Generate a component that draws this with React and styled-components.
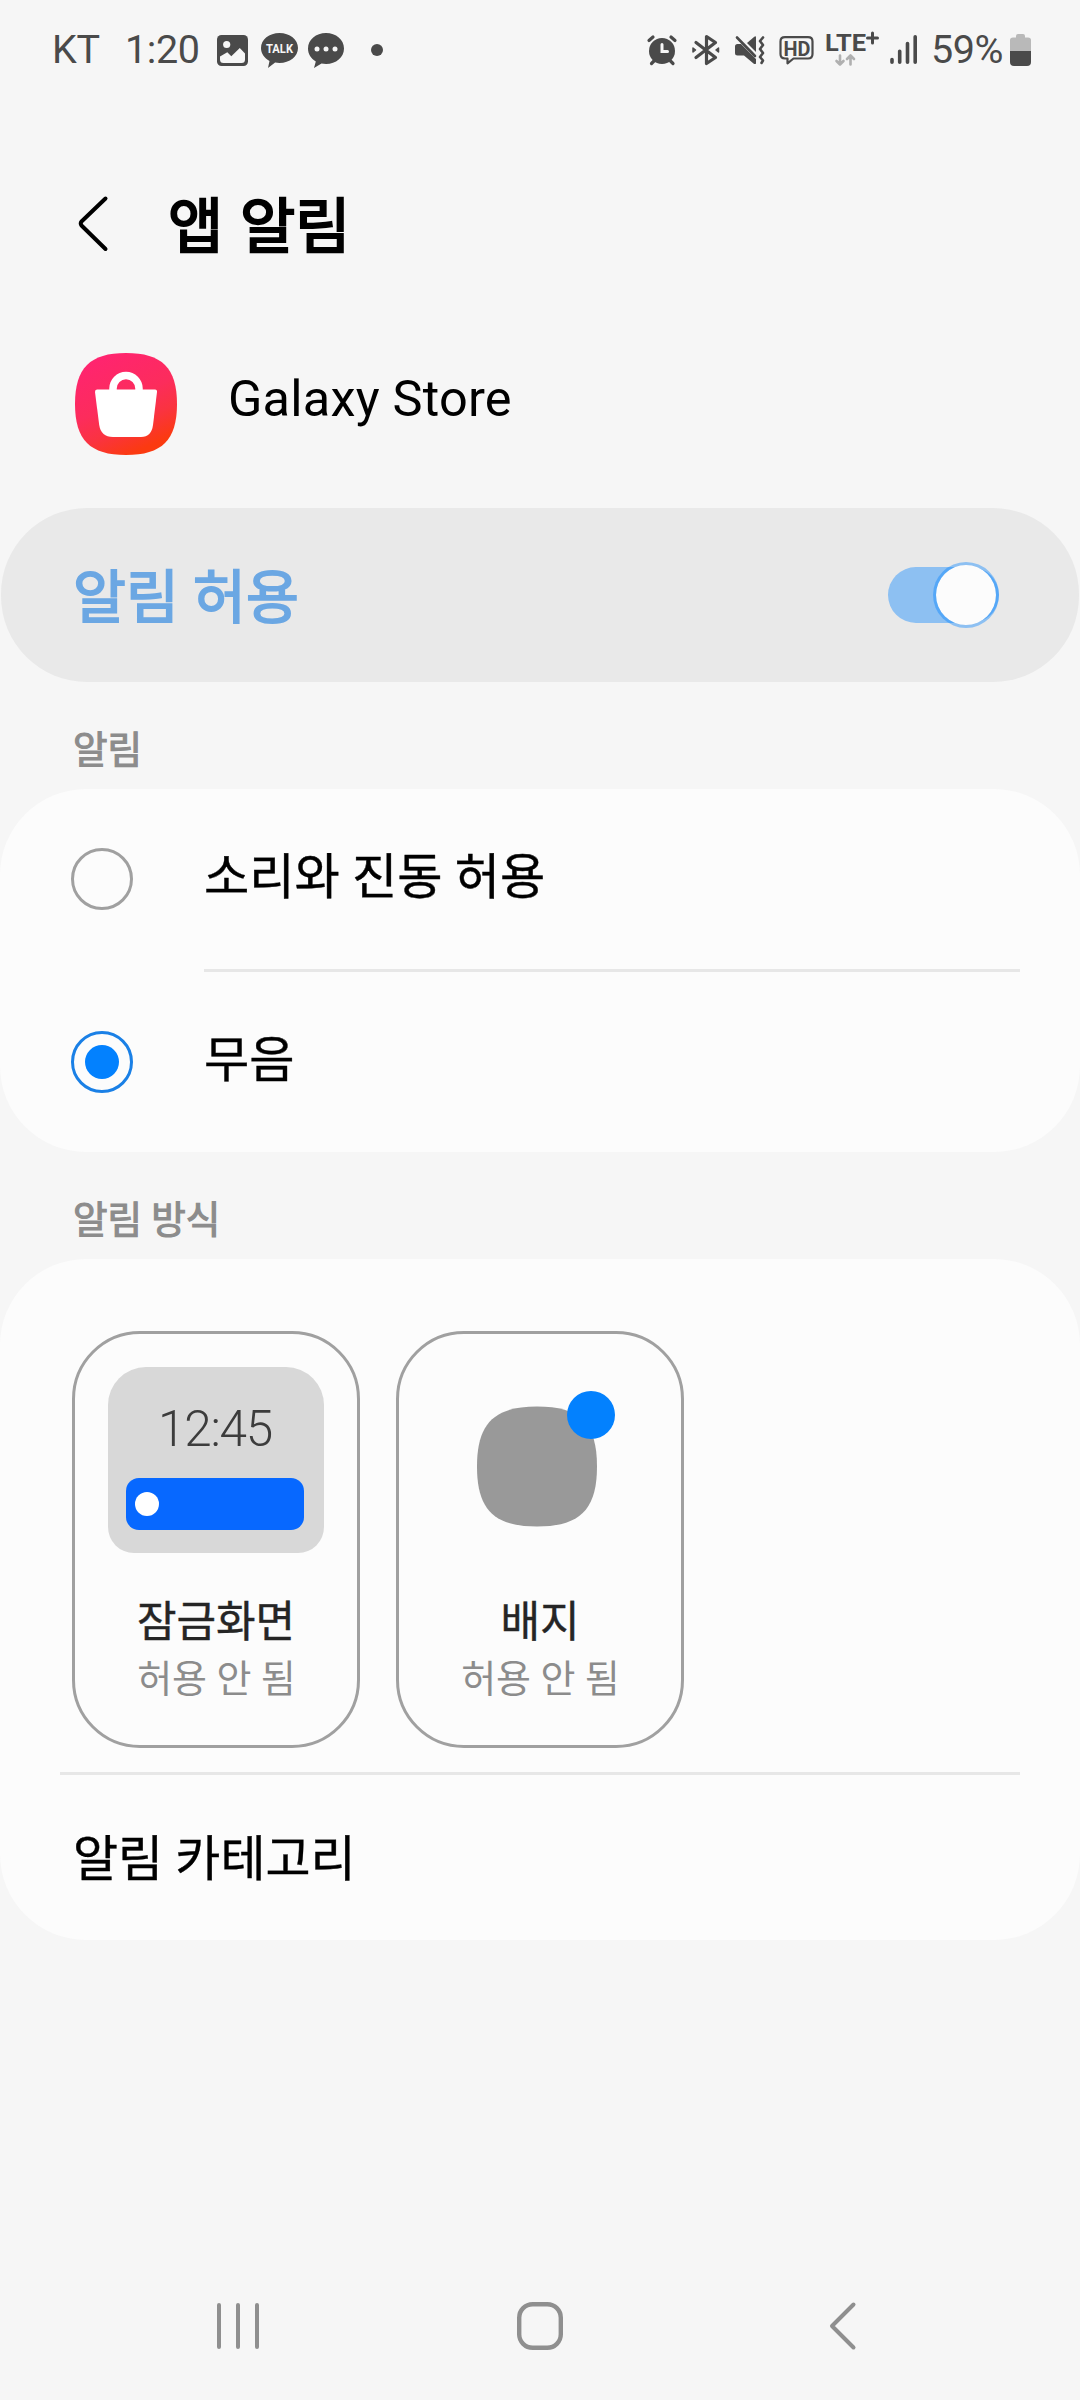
import React, { useState } from 'react'
import styled, { createGlobalStyle } from 'styled-components'

const GlobalStyle = createGlobalStyle`
  * { box-sizing: border-box; }
  body {
    margin: 0;
    background: #f6f6f6;
    font-family: Roboto, "Noto Sans CJK KR", sans-serif;
    color: #000;
  }
  button {
    padding: 0;
    border: none;
    background: none;
    font: inherit;
    color: inherit;
  }
  svg { display: block; flex: none; overflow: visible; }
`

const Screen = styled.div`
  width: 1080px;
  height: 2400px;
  display: flex;
  flex-direction: column;
  background: #f6f6f6;
  overflow: hidden;
`

/* status bar */
const StatusBar = styled.div`
  height: 100px;
  padding: 0 49px 0 52px;
  display: flex;
  justify-content: space-between;
  align-items: center;
  color: #4a4a4a;
  font-size: 39.5px;
  line-height: 48px;
`
const StatusGroup = styled.div`
  display: flex;
  align-items: center;
`
const StatusText = styled.span`
  width: ${(p) => p.$w}px;
  margin-right: ${(p) => p.$gap || 0}px;
  letter-spacing: -0.4px;
  white-space: nowrap;
`
const StatusIcon = styled.svg.attrs((p) => ({
  width: p.$w,
  height: 40,
  viewBox: `0 0 ${p.$w} 40`,
}))`
  margin-right: ${(p) => p.$gap || 0}px;
`

/* header */
const Header = styled.header`
  height: 152px;
  margin-top: 48px;
  padding-left: 77px;
  display: flex;
  align-items: center;
`
const BackButton = styled.button`
  width: 91px;
  height: 60px;
  display: flex;
  align-items: center;
`
const Title = styled.h1`
  margin: 0;
  padding-top: 8px;
  font-size: 60px;
  line-height: 80px;
  font-weight: 400;
  word-spacing: 2px;
  -webkit-text-stroke: 2.2px currentColor;
`
const AppRow = styled.div`
  height: 208px;
  padding-left: 75px;
  display: flex;
  align-items: center;
  gap: 51px;
`
const AppName = styled.span`
  font-size: 50.5px;
  line-height: 60px;
  letter-spacing: 0.2px;
  padding-bottom: 11px;
`

/* cards */
const Card = styled.section`
  border-radius: 86px;
  background: #fcfcfc;
`
const AllowCard = styled.section`
  height: 174px;
  margin: 0 1px;
  padding: 0 80px 0 72px;
  display: flex;
  align-items: center;
  justify-content: space-between;
  border-radius: 86px;
  background: #e9e9e9;
`
const AllowText = styled.span`
  padding-top: 7px;
  font-size: 57.5px;
  line-height: 80px;
  color: #6ba7e3;
  -webkit-text-stroke: 1.8px currentColor;
`
const Switch = styled.button`
  width: 111px;
  height: 56px;
  display: flex;
  align-items: center;
  justify-content: flex-end;
  border-radius: 28px;
  background: rgba(3, 129, 254, 0.4);
`
const Thumb = styled.span`
  flex: none;
  width: 66px;
  height: 66px;
  border: 3px solid rgba(3, 129, 254, 0.4);
  border-radius: 50%;
  background: #fcfcfc;
  background-clip: padding-box;
`
const SectionLabel = styled.h2`
  height: 107px;
  margin: 0;
  padding: 41px 0 0 73px;
  font-size: 37.5px;
  line-height: 54px;
  font-weight: 400;
  color: #8c8c8c;
  -webkit-text-stroke: 1.2px currentColor;
`
const OptionRow = styled.div`
  height: 180px;
  padding-left: 71px;
  display: flex;
  align-items: center;
  gap: 71px;
`
const Radio = styled.span`
  width: 62px;
  height: 62px;
  display: flex;
  align-items: center;
  justify-content: center;
  border: 3px solid ${(p) => (p.$on ? '#1a80e6' : '#a0a0a0')};
  border-radius: 50%;
  &::after {
    content: '';
    width: 34px;
    height: 34px;
    border-radius: 50%;
    background: ${(p) => (p.$on ? '#0381fe' : 'transparent')};
  }
`
const OptionText = styled.span`
  font-size: 49.2px;
  line-height: 70px;
  padding-bottom: 4px;
  -webkit-text-stroke: 0.4px currentColor;
`
const Divider = styled.div`
  height: 3px;
  margin-left: ${(p) => p.$left}px;
  margin-right: 60px;
  background: #e7e7e7;
`

/* notification style tiles */
const TileRow = styled.div`
  padding: 72px 72px 24px;
  display: flex;
  gap: 36px;
`
const Tile = styled.div`
  width: 288px;
  height: 417px;
  padding-top: 33px;
  display: flex;
  flex-direction: column;
  align-items: center;
  border: 3px solid #a0a0a0;
  border-radius: 68px;
`
const LockPreview = styled.div`
  width: 216px;
  height: 186px;
  padding: 32px 20px 0 18px;
  border-radius: 38px 38px 26px 26px;
  background: #d8d8d8;
`
const Clock = styled.div`
  height: 79px;
  text-align: center;
  font-size: 49.5px;
  line-height: 60px;
  font-weight: 300;
  letter-spacing: -1.2px;
  color: #3c3c3c;
`
const Banner = styled.div`
  height: 52px;
  padding-left: 9px;
  display: flex;
  align-items: center;
  border-radius: 13px;
  background: #0768ff;
  &::before {
    content: '';
    width: 24px;
    height: 24px;
    border-radius: 50%;
    background: #fff;
  }
`
const TileTitle = styled.div`
  margin-top: 39px;
  font-size: 43px;
  line-height: 60px;
  color: #252525;
  -webkit-text-stroke: 0.4px currentColor;
`
const TileState = styled.div`
  padding-left: 1px;
  font-size: 38px;
  line-height: 54px;
  color: #8c8c8c;
`
const LinkRow = styled.div`
  height: 165px;
  padding: 4px 0 0 73px;
  display: flex;
  align-items: center;
  font-size: 49px;
  line-height: 70px;
  -webkit-text-stroke: 0.4px currentColor;
`

const NavBar = styled.nav`
  height: 148px;
  margin-top: auto;
  display: grid;
  grid-template-columns: repeat(3, 302px);
  justify-content: center;
`
const NavButton = styled.button`
  display: flex;
  align-items: center;
  justify-content: center;
`

const options = [
  { id: 'sound', text: '소리와 진동 허용' },
  { id: 'silent', text: '무음' },
]

const LeftStatus = () => (
  <StatusGroup>
    <StatusText $w={73}>KT</StatusText>
    <StatusText $w={76} $gap={16}>1:20</StatusText>
    <StatusIcon $w={31} $gap={13}>
      <rect y="5" width="31" height="31" rx="4.5" fill="#4a4a4a" />
      <circle cx="9.7" cy="14.5" r="3.6" fill="#f6f6f6" />
      <path d="M3 26.5L10.3 22.3L14.3 26.3L22.8 18L28 23.5V29.5Q28 33 24.5 33H6.5Q3 33 3 29.5Z" fill="#f6f6f6" />
    </StatusIcon>
    <StatusIcon $w={37} $gap={10}>
      <path d="M18.5 3C28.7 3 37 9.5 37 18S28.7 33 18.5 33C17 33 15.500 32.8 14.1 32.6L7 38L8.5 30.9C3.4 28.2 0 23.5 0 18C0 9.5 8.3 3 18.5 3Z" fill="#4a4a4a" />
      <text x="5" y="23.3" fontSize="12.5" fontWeight="700" textLength="27" lengthAdjust="spacingAndGlyphs" fill="#f6f6f6">TALK</text>
    </StatusIcon>
    <StatusIcon $w={36} $gap={27}>
      <path d="M18 3C28 3 36 9.7 36 18.5S28 34 18 34C16.4 34 14.9 33.8 13.5 33.5L6 38L7.8 31.4C3 28.6 0 24 0 18.5C0 9.7 8 3 18 3Z" fill="#4a4a4a" />
      <circle cx="9" cy="19" r="2.5" fill="#f6f6f6" />
      <circle cx="18" cy="19" r="2.5" fill="#f6f6f6" />
      <circle cx="27" cy="19" r="2.5" fill="#f6f6f6" />
    </StatusIcon>
    <StatusIcon $w={12}>
      <circle cx="6" cy="20" r="6" fill="#4a4a4a" />
    </StatusIcon>
  </StatusGroup>
)

const RightStatus = () => (
  <StatusGroup>
    {/* alarm */}
    <StatusIcon $w={30} $gap={15} fill="none" stroke="#4a4a4a" strokeLinecap="round">
      <circle cx="15" cy="21" r="13" fill="#4a4a4a" stroke="none" />
      <path d="M2 10.5L6 7M28 10.5L24 7M7 31L4.500 33.5M23.5 31L26 33.5" strokeWidth="3.2" />
      <path d="M15 14.5V21.5H20.500" stroke="#f6f6f6" strokeWidth="3" />
    </StatusIcon>
    {/* bluetooth */}
    <StatusIcon $w={28} $gap={15} fill="none" stroke="#4a4a4a" strokeWidth="3.2" strokeLinecap="round" strokeLinejoin="round">
      <path d="M4 12.5L23.5 27.500L14.5 33.5V6.5L23.5 12.500L4 27.5" />
      <path d="M1 18V22L3.500 20ZM26.500 18V22L24 20Z" strokeWidth="1.5" fill="#4a4a4a" />
    </StatusIcon>
    {/* vibrate / mute */}
    <StatusIcon $w={30} $gap={14}>
      <path d="M2.5 14H6L21 29V33.5Q20 34.5 18.5 33.5L9 25.5H2.5Q0 25.5 0 23V16.5Q0 14 2.5 14Z" fill="#4a4a4a" />
      <path d="M12 13L19 7Q21 5.5 21 7.5V22Z" fill="#4a4a4a" />
      <path d="M2 7.5L20 26" stroke="#4a4a4a" strokeWidth="2.6" strokeLinecap="round" />
      <path d="M28 7.5L25 11L28 15L25 19L28 23L25 27L28 30.5L26.5 33" fill="none" stroke="#4a4a4a" strokeWidth="2.6" strokeLinecap="round" strokeLinejoin="round" />
    </StatusIcon>
    {/* HD voice */}
    <StatusIcon $w={36} $gap={11}>
      <path d="M6 7.2H29Q33.5 7.2 33.5 11.5V24Q33.5 28.5 29 28.5H14.5L8.5 33.3V28.5H6Q1.5 28.5 1.5 24V11.5Q1.5 7.2 6 7.2Z" fill="none" stroke="#4a4a4a" strokeWidth="2.2" strokeLinejoin="round" />
      <text x="4.5" y="25.500" fontSize="20.5" fontWeight="700" textLength="27" lengthAdjust="spacingAndGlyphs" fill="#4a4a4a">HD</text>
    </StatusIcon>
    {/* LTE+ with the data arrows below */}
    <StatusIcon $w={54} $gap={10} fill="none" strokeLinecap="round" strokeLinejoin="round">
      <text x="-1" y="20.5" fontSize="24.5" fontWeight="700" textLength="41" lengthAdjust="spacingAndGlyphs" fill="#4a4a4a">LTE</text>
      <path d="M46.500 3V13M41.500 8H51.500" stroke="#4a4a4a" strokeWidth="3" />
      <path d="M14 25.5V34.5M10.5 31L14 34.5L17.5 31M24.5 34.5V25.5M21 29L24.5 25.5L28 29" stroke="#b0b0b0" strokeWidth="2.6" />
    </StatusIcon>
    {/* signal */}
    <StatusIcon $w={28} $gap={13} stroke="#4a4a4a" strokeWidth="3.6" strokeLinecap="round">
      <path d="M2 29.5V32.2M9.700 21.2V32.2M17.500 13.5V32.2M25.200 6.8V32.2" />
    </StatusIcon>
    <StatusText $w={72} $gap={7}>59%</StatusText>
    <StatusIcon $w={21}>
      <path d="M0 21V10Q0 7.5 3 7.5H6V6Q6 4 8 4H13Q15 4 15 6V7.5H18Q21 7.5 21 10V21Z" fill="#b9b9b9" />
      <path d="M0 21H21V32Q21 36 17 36H4Q0 36 0 32Z" fill="#4a4a4a" />
    </StatusIcon>
  </StatusGroup>
)

const StoreIcon = () => (
  <svg width="102" height="102" viewBox="0 0 102 102">
    <defs>
      <linearGradient id="store" x1="0.3" y1="0" x2="0.75" y2="1">
        <stop offset="0" stopColor="#ff2470" />
        <stop offset="0.45" stopColor="#fc2c5c" />
        <stop offset="0.68" stopColor="#fa3340" />
        <stop offset="0.92" stopColor="#fb3a10" />
      </linearGradient>
    </defs>
    <path d="M51 0C87 0 102 15 102 51S87 102 51 102S0 87 0 51S15 0 51 0Z" fill="url(#store)" />
    <path d="M38 38V35.5A13 13 0 0 1 64 35.5V38" fill="none" stroke="#fff" strokeWidth="7.5" />
    <path d="M22 36.5H80Q82.3 36.5 82 39L78 72Q76.5 84 66 84H38Q26 84 24.2 72L20 39Q19.8 36.5 22 36.5Z" fill="#fff" />
  </svg>
)

const BadgeArt = () => (
  <svg width="216" height="186" viewBox="0 0 216 186">
    <path d="M105 39.5C148 39.5 165 56.5 165 99.5S148 159.5 105 159.5S45 142.5 45 99.5S62 39.5 105 39.5Z" fill="#999" />
    <circle cx="159" cy="48" r="24" fill="#0381fe" />
  </svg>
)

const App = () => {
  const [selected, setSelected] = useState('silent')

  return (
    <Screen>
      <GlobalStyle />
      <StatusBar>
        <LeftStatus />
        <RightStatus />
      </StatusBar>

      <Header>
        <BackButton>
          <svg width="32" height="56" viewBox="0 0 32 56" fill="none" stroke="#000" strokeWidth="4" strokeLinecap="round" strokeLinejoin="round">
            <path d="M28.5 2.5L4.5 25.5Q3 27.5 4.5 29.5L28.5 53" />
          </svg>
        </BackButton>
        <Title>앱 알림</Title>
      </Header>

      <AppRow>
        <StoreIcon />
        <AppName>Galaxy Store</AppName>
      </AppRow>

      <AllowCard>
        <AllowText>알림 허용</AllowText>
        <Switch role="switch" aria-checked="true">
          <Thumb />
        </Switch>
      </AllowCard>

      <SectionLabel>알림</SectionLabel>
      <Card>
        {options.map((option, i) => (
          <React.Fragment key={option.id}>
            {i > 0 && <Divider $left={204} />}
            <OptionRow onClick={() => setSelected(option.id)}>
              <Radio $on={selected === option.id} />
              <OptionText>{option.text}</OptionText>
            </OptionRow>
          </React.Fragment>
        ))}
      </Card>

      <SectionLabel>알림 방식</SectionLabel>
      <Card>
        <TileRow>
          <Tile>
            <LockPreview>
              <Clock>12:45</Clock>
              <Banner />
            </LockPreview>
            <TileTitle>잠금화면</TileTitle>
            <TileState>허용 안 됨</TileState>
          </Tile>
          <Tile>
            <BadgeArt />
            <TileTitle>배지</TileTitle>
            <TileState>허용 안 됨</TileState>
          </Tile>
        </TileRow>
        <Divider $left={60} />
        <LinkRow>알림 카테고리</LinkRow>
      </Card>

      <NavBar>
        <NavButton>
          <svg width="42" height="48" viewBox="0 0 42 48" stroke="#8f8f8f" strokeWidth="4" strokeLinecap="round">
            <path d="M2 3V45M21 3V45M40 3V45" />
          </svg>
        </NavButton>
        <NavButton>
          <svg width="46" height="48" viewBox="0 0 46 48" fill="none" stroke="#8f8f8f" strokeWidth="4.4">
            <rect x="2.2" y="2.2" width="41.6" height="43.6" rx="13.5" />
          </svg>
        </NavButton>
        <NavButton>
          <svg width="27" height="48" viewBox="0 0 27 48" fill="none" stroke="#8f8f8f" strokeWidth="4" strokeLinecap="round" strokeLinejoin="round">
            <path d="M24.5 2.5L3 24L24.5 45.5" />
          </svg>
        </NavButton>
      </NavBar>
    </Screen>
  )
}

export default App
